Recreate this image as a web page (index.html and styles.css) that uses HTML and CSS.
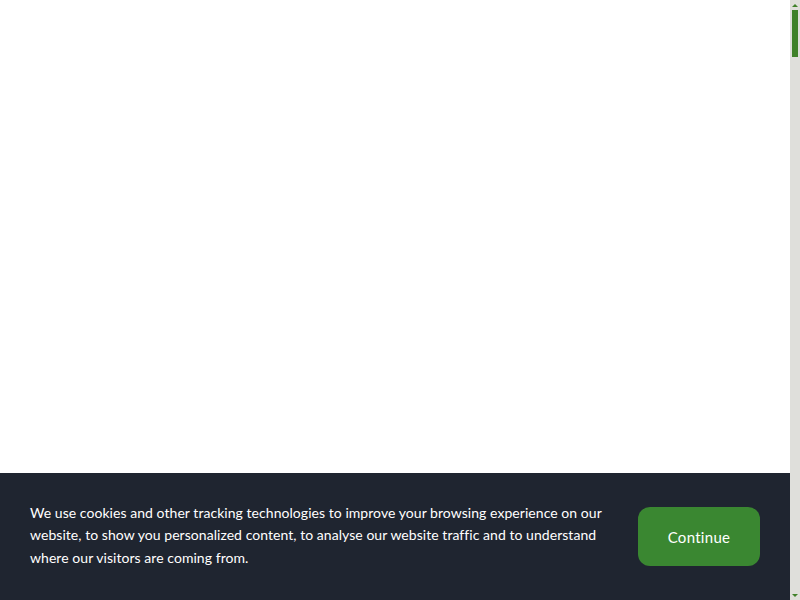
FILE: index.html
```html
<!DOCTYPE html>
<html lang="en">
<head>
  <meta charset="UTF-8" />
  <meta name="viewport" content="width=device-width, initial-scale=1.0" />
  <title>Cookies</title>
  <link rel="stylesheet" href="styles.css">
</head>
<body>
  <div class="app">
    <div class="main">
      <div class="page"></div>

      <div class="cookie-bar">
        <p class="cookie-text">
          We use cookies and other tracking technologies to improve your browsing experience on our
          website, to show you personalized content, to analyse our website traffic and to understand
          where our visitors are coming from.
        </p>
        <button class="cookie-btn" id="continueBtn">Continue</button>
      </div>
    </div>

    <div class="scroll-rail">
      <div class="arrow up"></div>
      <div class="thumb-track">
        <div class="thumb"></div>
      </div>
      <div class="arrow down"></div>
    </div>
  </div>

  <script>
    document.getElementById("continueBtn").addEventListener("click", () => {
      document.querySelector(".cookie-bar").style.display = "none";
    });
  </script>
</body>
</html>
```

FILE: styles.css
```css
body {
  margin: 0;
  background: #ffffff;
  font-family: Lato, "Noto Sans", sans-serif;
  overflow: hidden;
}

.app {
  display: flex;
  height: 100vh;
}

.main {
  flex-grow: 1;
  display: flex;
  flex-direction: column;
}

.page {
  flex-grow: 1;
  background: #ffffff;
}

.cookie-bar {
  height: 127px;
  box-sizing: border-box;
  background: #1f2530;
  display: flex;
  align-items: center;
  justify-content: space-between;
  padding: 0 30px 2px 30px;
  gap: 30px;
}

.cookie-text {
  margin: 0;
  color: #ffffff;
  font-size: 14px;
  line-height: 22.5px;
  max-width: 580px;
  letter-spacing: 0.05px;
}

.cookie-btn {
  flex-shrink: 0;
  width: 122px;
  height: 59px;
  margin-top: 2px;
  background: #3a8731;
  color: #ffffff;
  border: none;
  border-radius: 12px;
  font-family: Lato, "Noto Sans", sans-serif;
  font-size: 15px;
  letter-spacing: 0.3px;
  cursor: pointer;
}

/* fausse barre de défilement */
.scroll-rail {
  width: 10px;
  flex-shrink: 0;
  background: #dfdfdb;
  display: flex;
  flex-direction: column;
  align-items: center;
}

.arrow {
  height: 10px;
  width: 10px;
  display: flex;
  align-items: center;
  justify-content: center;
}

.arrow::before {
  content: "";
  border-left: 3px solid transparent;
  border-right: 3px solid transparent;
}

.arrow.up::before {
  border-bottom: 3px solid #3f8129;
}

.arrow.down::before {
  border-top: 3px solid #3f8129;
}

.thumb-track {
  flex-grow: 1;
  width: 10px;
  display: flex;
  justify-content: center;
}

.thumb {
  width: 6px;
  height: 47px;
  background: #3f8129;
}
```
